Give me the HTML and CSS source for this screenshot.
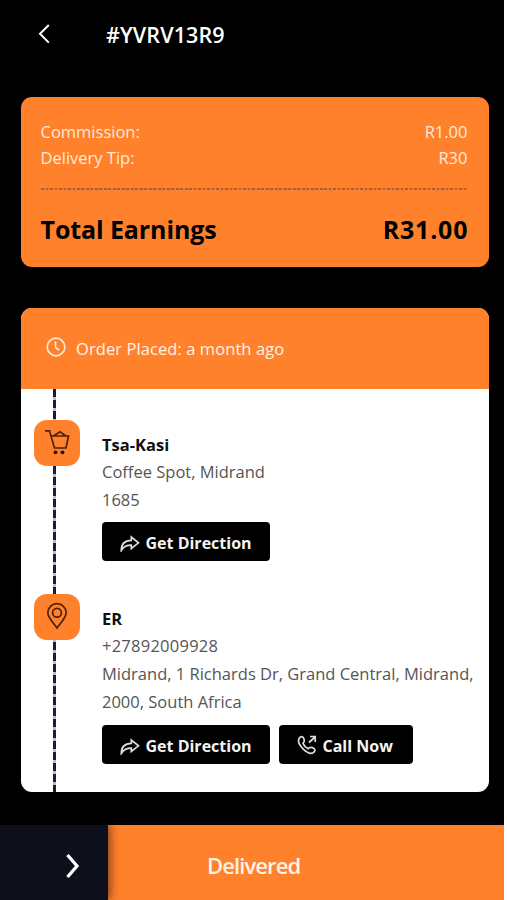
FILE: index.html
```
<!DOCTYPE html>
<html lang="en">
<head>
<meta charset="utf-8">
<title>Order #YVRV13R9</title>
<link rel="stylesheet" href="styles.css">
</head>
<body>
<svg class="sprite" aria-hidden="true">
  <symbol id="share" viewBox="0 0 20 18"><path d="M1.300 16.500C1.200 9.500 5 6.500 11.300 6.300V3l7.200 5.800-7.200 5.700v-3.400C6.500 11 3.500 12.500 1.300 16.500Z"/></symbol>
</svg>
<div class="app">
  <header class="topbar">
    <svg class="back" viewBox="0 0 12 20"><path d="M10.800 1 2 9.800l8.800 8.800"/></svg>
    <h1 class="title">#YVRV13R9</h1>
  </header>

  <section class="earnings">
    <div class="row"><span>Commission:</span><span>R1.00</span></div>
    <div class="row"><span>Delivery Tip:</span><span>R30</span></div>
    <div class="divider"></div>
    <div class="total"><span class="total-label">Total Earnings</span><span class="total-value">R31.00</span></div>
  </section>

  <section class="order">
    <div class="placed">
      <svg class="clock" viewBox="0 0 20 20"><circle cx="10" cy="10" r="8.800"/><path d="M9.500 4.200v6.100l3.600 2.800"/></svg>
      <span>Order Placed: a month ago</span>
    </div>
    <div class="timeline">
      <svg class="track" viewBox="0 0 3 403" preserveAspectRatio="none"><path class="track-base" d="M1.500 0v403"/><path class="track-dash" d="M1.500 0v403"/></svg>
      <div class="stop pickup">
        <div class="marker"><svg viewBox="0 0 46 46"><path d="M11 10.800h4.500l5 17.200h11.500L34.500 16H17.500M19.500 16l6.500-4.300 6 4.300"/><circle class="wheel" cx="21.500" cy="32.300" r="1.900"/><circle class="wheel" cx="28.500" cy="32.300" r="1.900"/></svg></div>
        <div class="details">
          <div class="name">Tsa-Kasi</div>
          <div class="line">Coffee Spot, Midrand</div>
          <div class="line">1685</div>
          <div class="actions"><button class="btn direction"><svg viewBox="0 0 20 18"><use href="#share"/></svg><span>Get Direction</span></button></div>
        </div>
      </div>
      <div class="stop dropoff">
        <div class="marker"><svg viewBox="0 0 46 46"><path d="M23 34C19 28.500 13.800 23.500 13.800 18.800a9.200 9.200 0 0 1 18.400 0C32.200 23.500 27 28.500 23 34Z"/><circle cx="23" cy="18.800" r="4.400"/></svg></div>
        <div class="details">
          <div class="name">ER</div>
          <div class="line phone">+27892009928</div>
          <div class="line">Midrand, 1 Richards Dr, Grand Central, Midrand,</div>
          <div class="line">2000, South Africa</div>
          <div class="actions">
            <button class="btn direction"><svg viewBox="0 0 20 18"><use href="#share"/></svg><span>Get Direction</span></button>
            <button class="btn call"><svg viewBox="0 0 20 20"><path d="M2 3.500C3.500 1 5.500.9 6.600 3.200c1 2 1.300 3.200-.6 5.200 1 2.500 2.800 4.300 5.200 5.300 1.900-2 3.300-1.700 5.300-.5 2.200 1.300 1.800 3-.4 4.500C11.500 20.500-.8 10 2 3.500ZM12 7.500l6-5.500M13 1.500h5.200V7"/></svg><span>Call Now</span></button>
          </div>
        </div>
      </div>
    </div>
  </section>

  <footer class="slider">
    <div class="handle"><svg viewBox="0 0 16 26"><path d="M2.500 2l9.500 11-9.500 11"/></svg></div>
    <div class="status">Delivered</div>
  </footer>
</div>
</body>
</html>
```
FILE: styles.css
```
* { box-sizing: border-box; }
body {
  margin: 0;
  background: #fff;
  font-family: "Open Sans", "Noto Sans", sans-serif;
}
.sprite { display: none; }
svg { display: block; flex: none; fill: none; }
.app {
  display: flex;
  flex-direction: column;
  width: 503.5px;
  height: 900px;
  background: #000;
}
.topbar { display: flex; align-items: center; height: 97px; padding: 0 0 28px 38px; }
.back { width: 12px; height: 20px; margin-bottom: 2px; stroke: #fff; stroke-width: 2; }
.title { margin: 0 0 0 56px; color: #fff; font-size: 21.5px; font-weight: 600; letter-spacing: 0.1px; line-height: 28px; }

.earnings {
  height: 170px;
  margin: 0 15px 0 20.5px;
  padding: 22px 21px 0 20px;
  border-radius: 11px;
  background: #ff812c;
}
.row { display: flex; justify-content: space-between; color: #ffe9d8; font-size: 16.5px; font-weight: 500; line-height: 26px; white-space: nowrap; }
.divider { height: 2px; margin: 17px 0 21px; background: repeating-linear-gradient(90deg, #a7633c 0 2.500px, #e87a33 2.500px 4.500px); }
.total { display: flex; justify-content: space-between; font-size: 25px; font-weight: 700; line-height: 36px; white-space: nowrap; }
.total-label { letter-spacing: -0.1px; }
.total-value { letter-spacing: 0.8px; margin-right: -0.8px; }

.order {
  height: 484px;
  margin: 41px 15px 0 20.5px;
  overflow: hidden;
  border-radius: 11px;
  background: #fff;
}
.placed { display: flex; align-items: center; height: 81px; padding-left: 25px; gap: 10.5px; background: #ff812c; color: #fff3e8; font-size: 16.5px; font-weight: 500; letter-spacing: 0.08px; white-space: nowrap; }
.clock { width: 20px; height: 20px; margin-bottom: 4px; stroke: #ffe9d8; stroke-width: 1.700; }
.timeline { position: relative; height: 403px; padding: 31px 0 0 13.5px; }
.track { position: absolute; left: 32px; top: 0; width: 3px; height: 403px; }
.track path { stroke-width: 3; }
.track-base { stroke: #b9bccb; }
.track-dash { stroke: #171c38; stroke-dasharray: 8 3; }
.stop { position: relative; display: flex; gap: 22px; }
.pickup { height: 174px; }
.marker { flex: none; width: 46px; height: 46px; border-radius: 13px; background: #ff812c; }
.marker svg { width: 46px; height: 46px; stroke: #4b230b; stroke-width: 1.700; }
.marker .wheel { fill: #210c08; stroke: none; }
.details { padding-top: 11px; white-space: nowrap; }
.name { height: 26.5px; color: #111; font-size: 16.5px; font-weight: 700; line-height: 27px; }
.line { height: 28.400px; color: #555; font-size: 16.5px; line-height: 28px; }
.phone { letter-spacing: 0.25px; }
.actions { display: flex; gap: 9px; margin: 8px 0 0 -0.5px; }
.btn {
  display: flex;
  align-items: center;
  height: 39px;
  padding: 3px 0 0 18px;
  gap: 6px;
  border: 0;
  border-radius: 4px;
  background: #000;
  color: #f3f3f3;
  font: 700 16px "Open Sans", sans-serif;
  white-space: nowrap;
}
.btn svg { width: 20px; height: 18px; stroke: #ddd; stroke-width: 1.700; }
.direction { width: 168px; }
.call { width: 134px; }
.call svg { height: 20px; margin-bottom: 2px; }

.slider { display: flex; height: 75px; margin-top: 33px; overflow: hidden; background: #ff812c; }
.handle { display: flex; align-items: center; width: 108px; padding: 6px 0 0 65px; background: #0d0f1b; box-shadow: 2px 0 9px rgba(60, 30, 20, .7); }
.handle svg { width: 16px; height: 26px; stroke: #fff; stroke-width: 3.300; }
.status { padding-left: 99px; color: #fff3e8; font-size: 22px; font-weight: 600; letter-spacing: -0.9px; line-height: 80px; }
```
